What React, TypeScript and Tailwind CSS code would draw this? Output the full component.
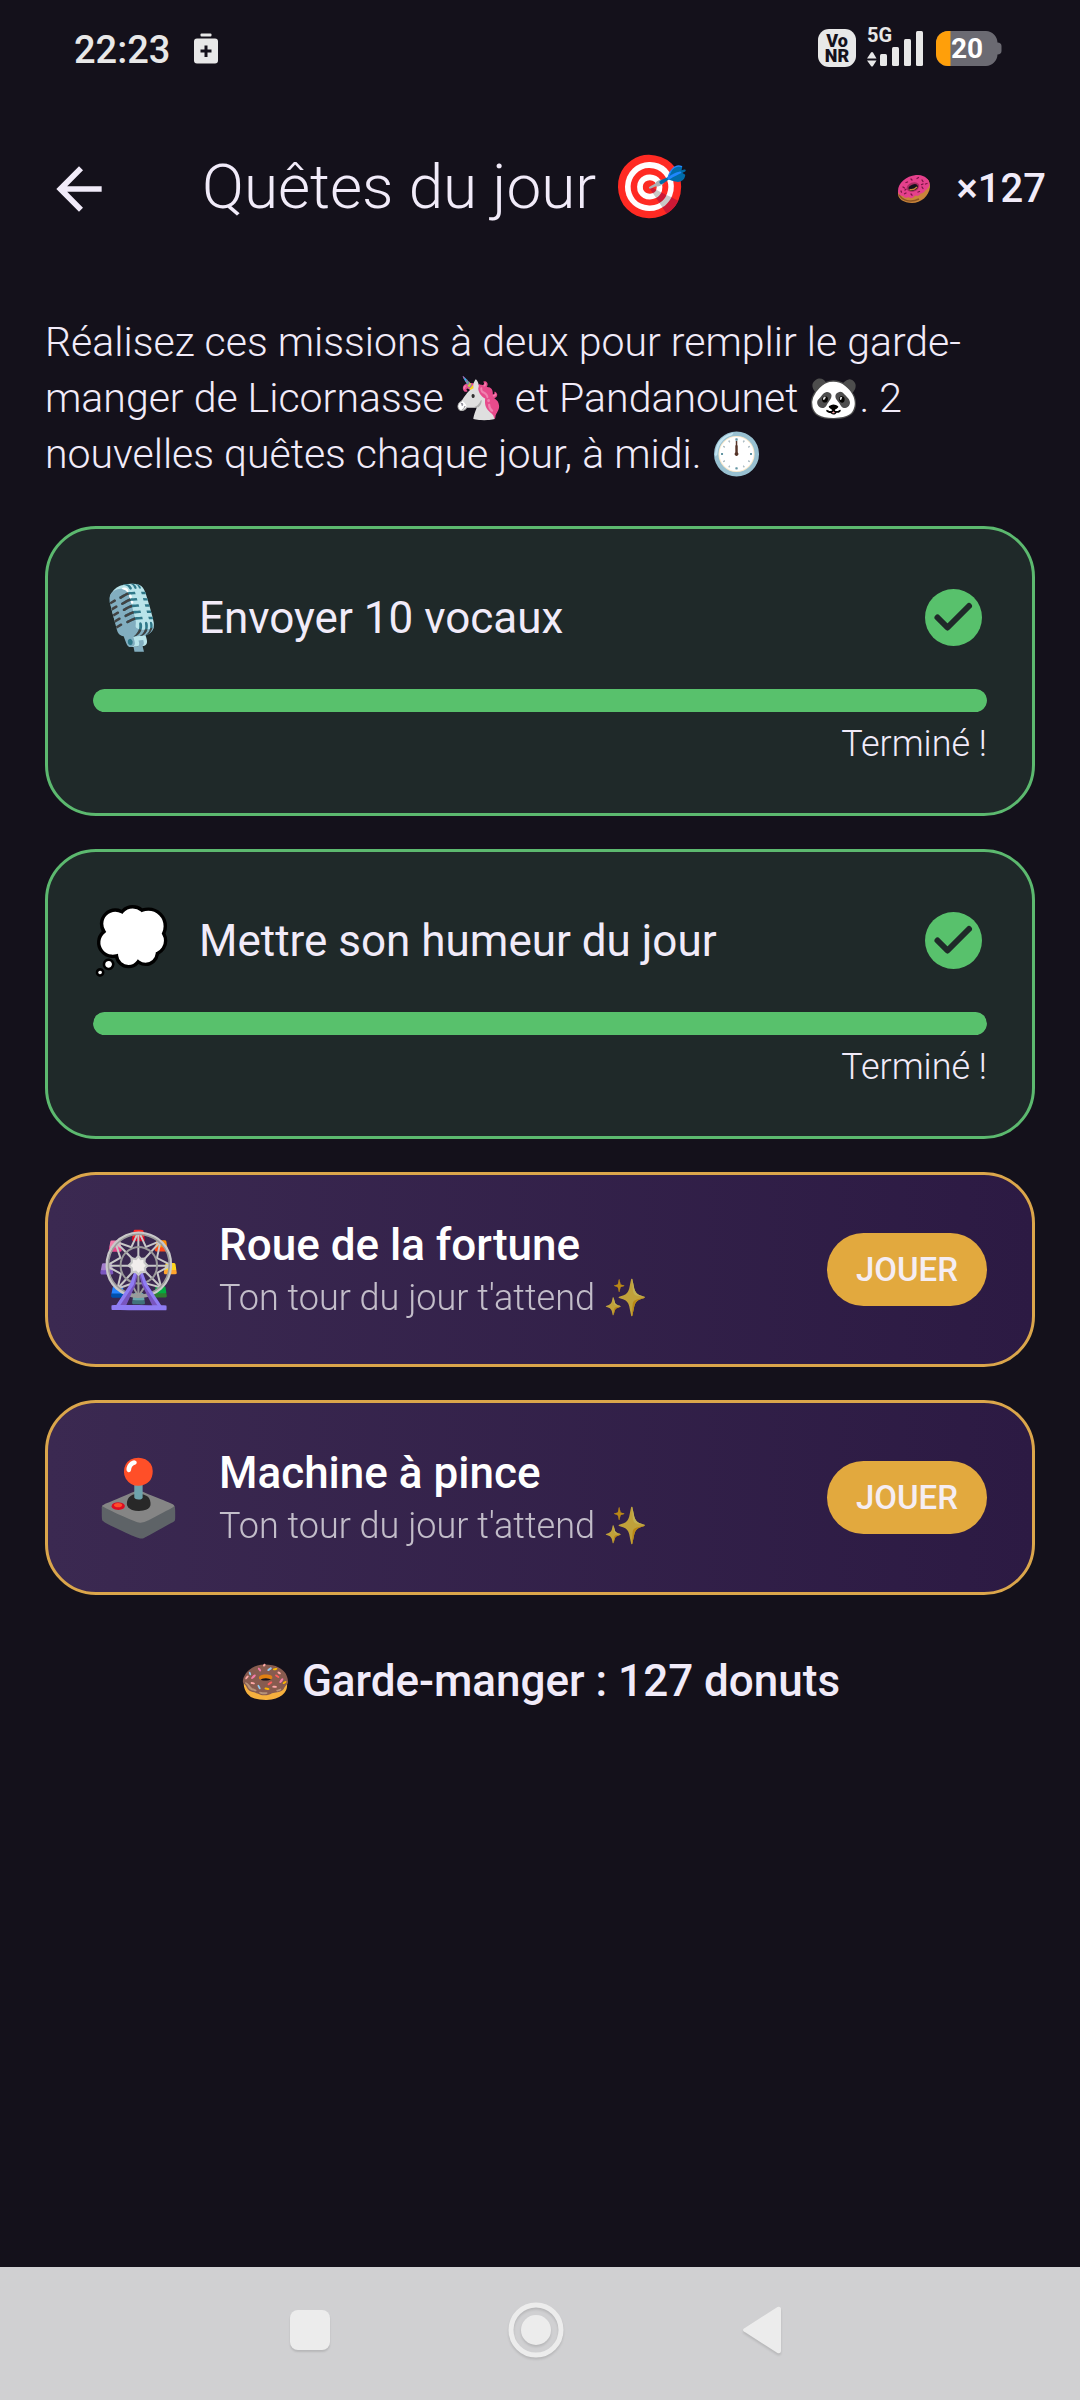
import React from "react";

function StatusBar() {
  return (
    <div className="flex h-24 items-center justify-between pl-[74px] pr-[78px] text-[#e8e8e8]">
      <div className="flex items-center gap-6">
        <span className="pt-1 text-[38px] leading-[48px] font-medium">22:23</span>
        <svg className="h-[31px] w-6" viewBox="0 0 24 31" fill="currentColor" aria-hidden="true">
          <rect x="6.5" y="0.5" width="11" height="3" rx="1" />
          <path
            fillRule="evenodd"
            d="M3 5.500h18a3 3 0 0 1 3 3v19a3 3 0 0 1-3 3H3a3 3 0 0 1-3-3v-19a3 3 0 0 1 3-3zM10.500 12.500v4h-4v3h4v4.500h3v-4.500h4v-3h-4v-4z"
          />
        </svg>
      </div>
      <div className="flex items-center gap-[11px]">
        <div className="h-[38px] w-[38px] rounded-[11px] bg-[#e8e8e8] pt-1 text-center text-[18px] leading-[15px] font-black text-[#14111b]">
          Vo
          <br />
          NR
        </div>
        <div className="relative h-[38px] w-[58px]">
          <span className="absolute -top-1 left-0 text-[20px] leading-5 font-bold">5G</span>
          <svg className="h-[38px] w-[58px]" viewBox="0 0 58 38" fill="currentColor" aria-hidden="true">
            <path d="M0 29.500 4 23.500Q5 22.500 6 23.500L9.500 29.500zM0 31.500h9.500L6 37Q5 38 4 37z" />
            <rect x="13" y="25" width="7" height="12" rx="1.500" />
            <rect x="25" y="18" width="7" height="19" rx="1.500" />
            <rect x="37" y="10" width="7" height="27" rx="1.500" />
            <rect x="49" y="2" width="7" height="35" rx="1.500" />
          </svg>
        </div>
        <div className="relative flex h-[35px] w-[66px] items-center">
          <svg className="absolute inset-0 h-[35px] w-[66px]" viewBox="0 0 66 35" aria-hidden="true">
            <path d="M12 0H50A12 12 0 0 1 61.500 11.500C64 11.500 65.500 13 65.500 15V20C65.500 22 64 23.500 61.500 23.500A12 12 0 0 1 50 35H12A12 12 0 0 1 0 23V12A12 12 0 0 1 12 0z" fill="#6b6a72" />
            <path d="M12 0h2.500v35H12A12 12 0 0 1 0 23V12A12 12 0 0 1 12 0z" fill="#ff9f0a" />
          </svg>
          <span className="relative pl-[15px] text-[28px] leading-[35px] font-bold text-white">20</span>
        </div>
      </div>
    </div>
  );
}

function PinkDonut() {
  return (
    <svg className="h-7 w-[34px]" viewBox="0 0 34 28" aria-hidden="true">
      <path d="M1 17C0 24 7 28 15 28 24 28 32 21 33 12 33 8 32 5 30 4L3 13z" fill="#c9853a" />
      <path d="M2 19C5 26 14 28 22 24" stroke="#8d5522" strokeWidth="1.500" fill="none" />
      <path
        d="M1 16C1 8 9 1 19 0 27-.5 33 4 32.500 10 32 12 31.500 12 31 13 30 15 29 14.500 28 15.500 27 18 25 18 23.500 18.500 22 21.500 20 21 18 20.500 16 23.500 13.500 24 11.500 22 9 23.500 7.500 23 6 21 3.500 21 1 19 1 16z"
        fill="#e5408c"
      />
      <ellipse cx="16" cy="12" rx="6.500" ry="4.500" fill="#a82d62" transform="rotate(-20 16 12)" />
      <ellipse cx="16.200" cy="12.500" rx="4.800" ry="3" fill="#14111b" transform="rotate(-20 16.200 12.500)" />
      <path d="M12.500 14.500q4 1 7.500-2.500" stroke="#c9853a" strokeWidth="1.500" fill="none" />
      <path
        d="M6 12l1.500 1M9 7.500l1.500-.5M14 4l1 1M20 3.500l1.500-1M25 5l1 1.500M28.500 9l1.500-.5M25 12l1 1.500M21 17l1.500-.5M14 19l1 1.200M9 18l-1.500.8M4 16l.5 1.200M26 9l-1.500.6M8 15l1-.8"
        stroke="#7a1745"
        strokeWidth="1.300"
        strokeLinecap="round"
      />
    </svg>
  );
}

function CheckBadge() {
  return (
    <svg className="mr-[5px] h-[57px] w-[57px]" viewBox="0 0 57 57" role="img" aria-label="Terminé">
      <circle cx="28.500" cy="28.500" r="28.500" fill="#58c16c" />
      <path d="M12.500 28.500 22.500 38.500 44 17" fill="none" stroke="#1f2929" strokeWidth="6" strokeLinecap="round" strokeLinejoin="round" />
    </svg>
  );
}

function QuestCard({ emoji, title, progress }: { emoji: string; title: string; progress: number }) {
  return (
    <section className="rounded-[51px] border-[3px] border-[#5cb96f] bg-[#1f2929] p-[45px]">
      <div className="flex h-[86px] items-center">
        <span className="w-[106px] pt-0.5 text-[62px] leading-[86px]">{emoji}</span>
        <h2 className="flex-1 pt-0.5 text-[44px] leading-[56px] font-normal">{title}</h2>
        <CheckBadge />
      </div>
      <div
        className="mt-[29px] h-[23px] overflow-hidden rounded-full bg-[#34403f]"
        role="progressbar"
        aria-label={title}
        aria-valuenow={progress}
        aria-valuemin={0}
        aria-valuemax={100}
      >
        <div className="h-full rounded-full bg-[#58c16c]" style={{ width: `${progress}%` }} />
      </div>
      <p className="mt-2 text-right text-[36px] leading-[48px] font-light">Terminé !</p>
    </section>
  );
}

function GameCard({ emoji, title }: { emoji: string; title: string }) {
  return (
    <section className="flex h-[195px] items-center rounded-[51px] border-[3px] border-[#dba64b] bg-linear-to-r from-[#3b2951] to-[#2c1a43] px-[45px]">
      <span className="w-[126px] text-[73px] leading-[90px]">{emoji}</span>
      <div className="flex-1">
        <h2 className="text-[44px] leading-[56px] font-medium text-white">{title}</h2>
        <p className="text-[36px] leading-[50px] font-light text-white opacity-70">Ton tour du jour t'attend ✨</p>
      </div>
      <button type="button" className="h-[73px] rounded-full bg-[#e2a93e] px-[29px] text-[33px] leading-10 font-medium text-[#f5edf3]">
        JOUER
      </button>
    </section>
  );
}

export default function App() {
  return (
    <div className="flex min-h-screen flex-col bg-[#14111b] font-['Roboto','Noto_Color_Emoji',sans-serif] text-[#f1ebf9]">
      <StatusBar />
      <header className="flex h-[186px] items-center pr-[34px] pl-[45px]">
        <button type="button" aria-label="Retour" className="flex h-[68px] w-[68px] items-center justify-center">
          <svg className="h-[68px] w-[68px]" viewBox="0 0 24 24" fill="currentColor" aria-hidden="true">
            <path d="M20 11H7.830l5.590-5.590L12 4l-8 8 8 8 1.410-1.410L7.830 13H20v-2z" />
          </svg>
        </button>
        <h1 className="flex-1 pl-[89px] pb-1 text-[62px] leading-[80px] font-light">Quêtes du jour 🎯</h1>
        <PinkDonut />
        <span className="pl-[26px] text-[40px] leading-[56px] font-medium">×127</span>
      </header>
      <main className="flex flex-1 flex-col gap-[33px] px-[45px] pt-8">
        <p className="text-[41px] leading-[56px] font-light">
          Réalisez ces missions à deux pour remplir le garde-manger de Licornasse 🦄 et Pandanounet 🐼. 2
          nouvelles quêtes chaque jour, à midi. 🕛
        </p>
        <div className="mt-[11px] flex flex-col gap-[33px]">
          <QuestCard emoji="🎙️" title="Envoyer 10 vocaux" progress={100} />
          <QuestCard emoji="💭" title="Mettre son humeur du jour" progress={100} />
          <GameCard emoji="🎡" title="Roue de la fortune" />
          <GameCard emoji="🕹️" title="Machine à pince" />
        </div>
        <p className="mt-5 text-center text-[44px] leading-[66px] font-medium">
          <span className="text-[41px]">🍩</span> Garde-manger : 127 donuts
        </p>
      </main>
      <nav className="flex h-[133px] items-center justify-center gap-[130px] bg-[#d0d0d2] pr-2 pb-2 text-[#ececec]">
        <button type="button" aria-label="Applications récentes" className="flex h-24 w-24 items-center justify-center">
          <span className="h-10 w-10 rounded-lg bg-current shadow-[0_2px_2px_rgba(0,0,0,0.12)]" />
        </button>
        <button type="button" aria-label="Accueil" className="flex h-24 w-24 items-center justify-center">
          <svg className="h-[60px] w-[60px] drop-shadow-[0_2px_1px_rgba(0,0,0,0.12)]" viewBox="0 0 60 60" aria-hidden="true">
            <circle cx="30" cy="30" r="25" fill="none" stroke="currentColor" strokeWidth="5" />
            <circle cx="30" cy="30" r="15" fill="currentColor" />
          </svg>
        </button>
        <button type="button" aria-label="Précédent" className="flex h-24 w-24 items-center justify-center">
          <svg className="h-12 w-[38px] drop-shadow-[0_2px_1px_rgba(0,0,0,0.12)]" viewBox="0 0 38 48" fill="currentColor" aria-hidden="true">
            <path d="M1 22.500 34.500 1Q38 0 38 3.500V44.500Q38 48 34.500 47L1 25.500Q-1 24 1 22.500z" />
          </svg>
        </button>
      </nav>
    </div>
  );
}
